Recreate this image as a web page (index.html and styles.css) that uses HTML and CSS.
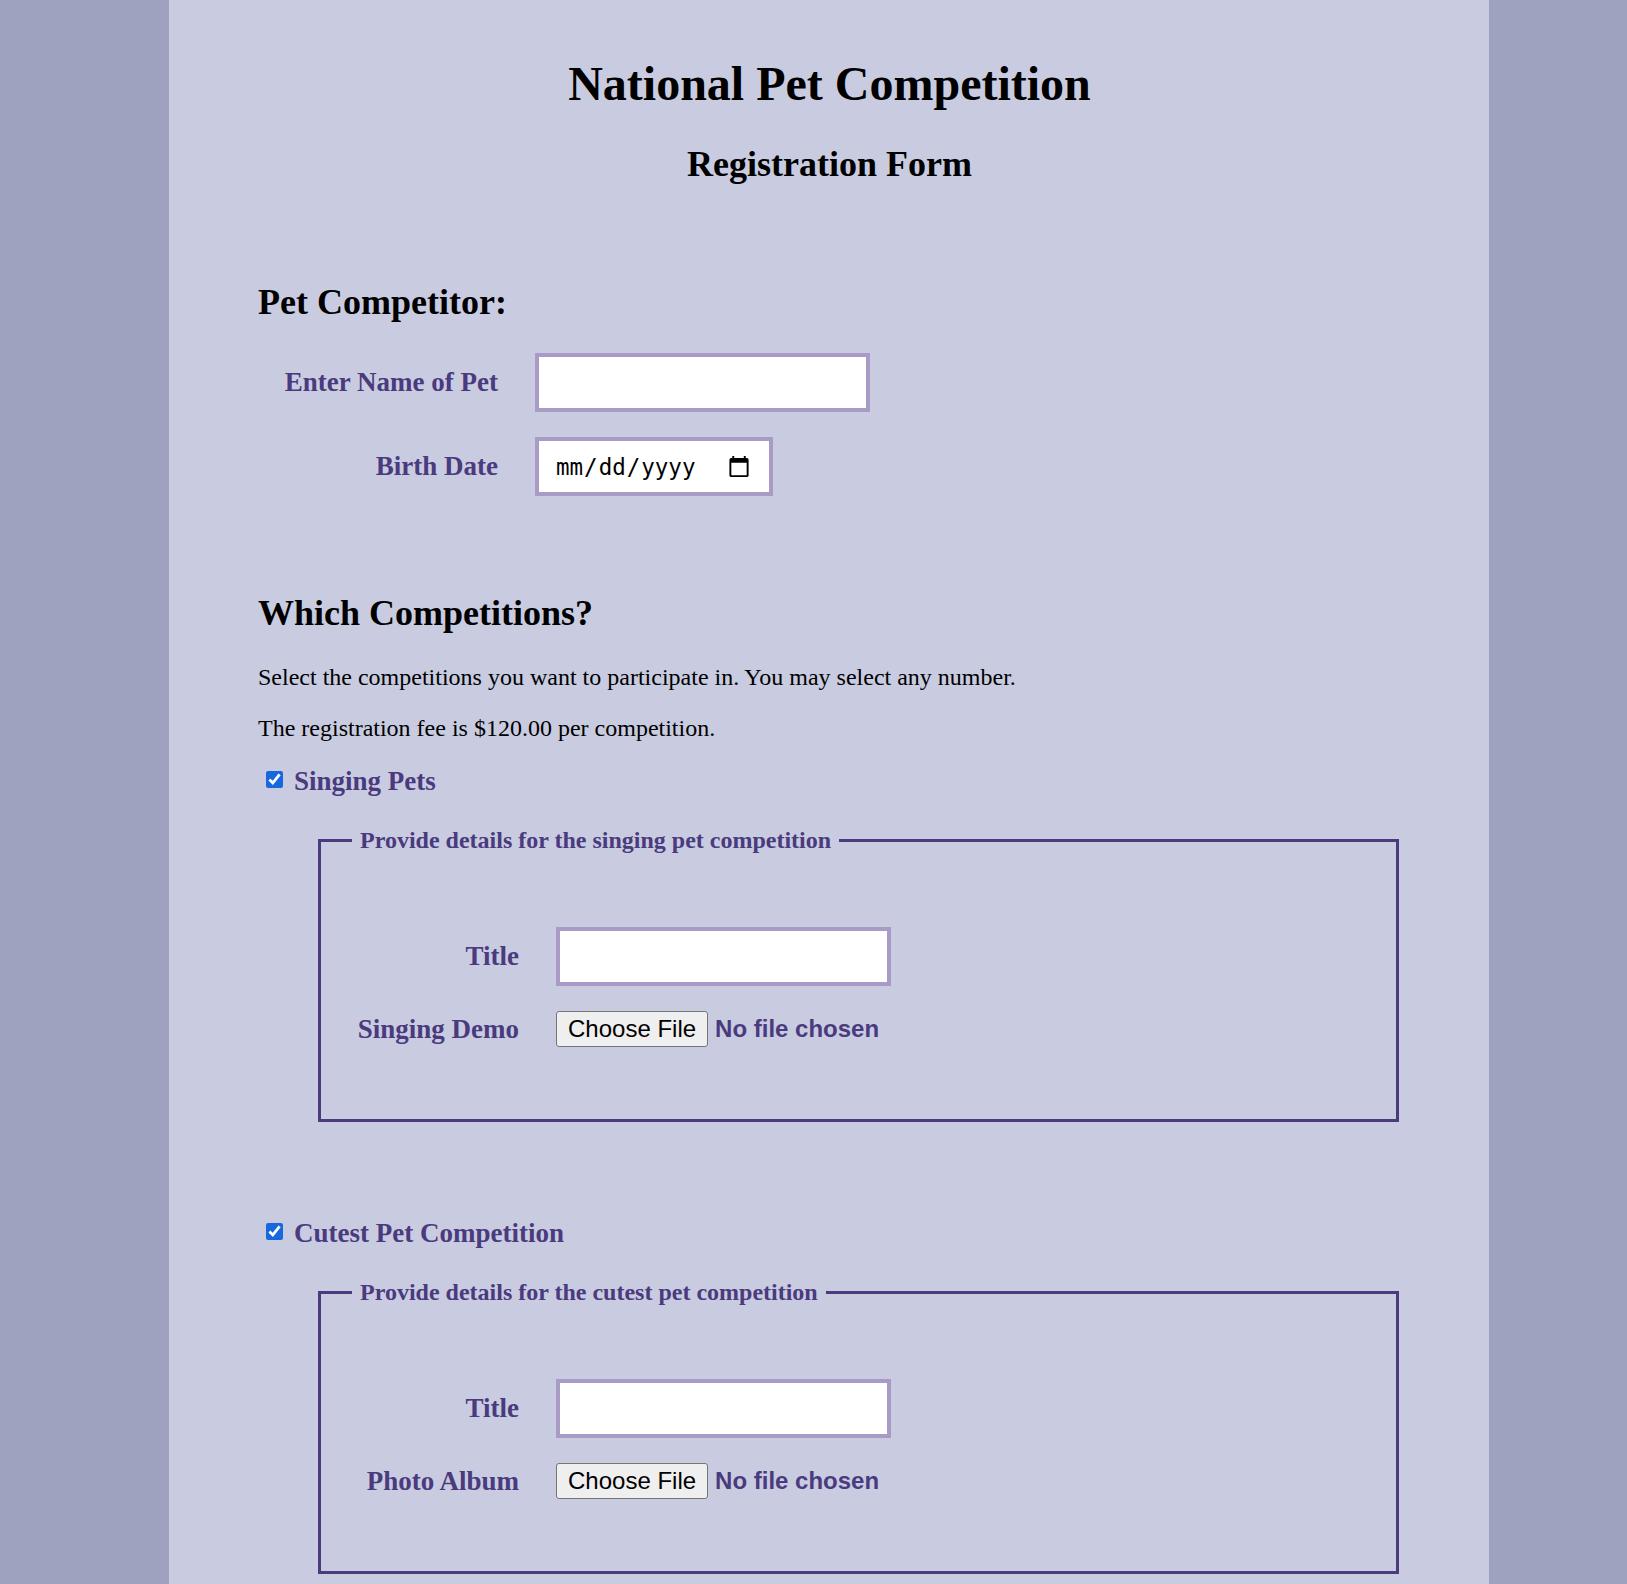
FILE: index.html
```html
<!DOCTYPE html>
<html lang="en">
<head>
<meta charset="utf-8">
<title>National Pet Competition</title>
<link rel="stylesheet" href="styles.css">
</head>
<body>
<div class="page">
  <header class="masthead">
    <h1 class="title">National Pet Competition</h1>
    <h2 class="subtitle">Registration Form</h2>
  </header>

  <section class="competitor">
    <h2 class="section-title">Pet Competitor:</h2>
    <div class="field">
      <label class="field-label" for="petName">Enter Name of Pet</label>
      <input class="text-box" type="text" id="petName">
    </div>
    <div class="field">
      <label class="field-label" for="birthDate">Birth Date</label>
      <input class="text-box date-box" type="date" id="birthDate">
    </div>
  </section>

  <section class="competitions">
    <h2 class="section-title">Which Competitions?</h2>
    <p class="note">Select the competitions you want to participate in. You may select any number.</p>
    <p class="note">The registration fee is $120.00 per competition.</p>

    <label class="choice"><input type="checkbox" checked> Singing Pets</label>
    <fieldset class="details">
      <legend>Provide details for the singing pet competition</legend>
      <div class="field">
        <label class="field-label" for="songTitle">Title</label>
        <input class="text-box" type="text" id="songTitle">
      </div>
      <div class="field">
        <label class="field-label" for="songDemo">Singing Demo</label>
        <input class="file-box" type="file" id="songDemo">
      </div>
    </fieldset>

    <label class="choice"><input type="checkbox" checked> Cutest Pet Competition</label>
    <fieldset class="details">
      <legend>Provide details for the cutest pet competition</legend>
      <div class="field">
        <label class="field-label" for="photoTitle">Title</label>
        <input class="text-box" type="text" id="photoTitle">
      </div>
      <div class="field">
        <label class="field-label" for="photoAlbum">Photo Album</label>
        <input class="file-box" type="file" id="photoAlbum">
      </div>
    </fieldset>
  </section>
</div>
</body>
</html>
```
FILE: styles.css
```css
* { box-sizing: border-box; }
html, body { margin: 0; }
body {
  background: #9ea2bf;
  font-family: "Liberation Serif", "Times New Roman", serif;
  font-size: 24px;
  color: #000;
}
.page {
  width: 1320px;
  margin-left: 169px;
  background: #c9cce0;
  padding: 24px 88px 40px 89px;
  min-height: 1584px;
}
.masthead { text-align: center; }
.title { font-size: 48px; margin: 32px 0 0; }
.subtitle { font-size: 36px; margin: 32px 0 0; }
.section-title { font-size: 36px; margin: 96px 0 30px; }
.field { display: flex; align-items: center; margin-bottom: 25px; }
.details .field:last-child { margin-bottom: 0; }
.field-label {
  width: 240px;
  margin-right: 37px;
  text-align: right;
  font-size: 27px;
  font-weight: bold;
  color: #4a3a7e;
}
.details .field-label { width: 167px; }
.text-box {
  width: 335px;
  height: 59px;
  border: 4px solid #a89cc6;
  background: #fff;
  padding: 0 16px;
  font: 22.5px "DejaVu Sans Mono", monospace;
  color: #000;
  outline: none;
  border-radius: 0;
}
.date-box { width: 238px; }
.date-box::-webkit-calendar-picker-indicator {
  width: 24px;
  height: 24px;
  padding: 1px;
  margin-right: 1px;
}
.note { margin: 24px 0; }
.choice {
  display: flex;
  align-items: center;
  font-size: 27px;
  font-weight: bold;
  color: #4a3a7e;
  margin-top: 24px;
}
.choice input {
  width: 17px;
  height: 17px;
  margin: 0 11px 4px 8px;
  accent-color: #1668dc;
}
.details {
  margin: 30px 2px 96px 60px;
  border: 3px solid #4a3a7e;
  padding: 73px 31px 72px;
}
.details legend {
  padding: 0 8px;
  font-size: 24px;
  font-weight: bold;
  color: #4a3a7e;
}
.file-box {
  font: bold 24px "Liberation Sans", Arial, sans-serif;
  color: #4a3a7e;
}
.file-box::file-selector-button {
  font: 24px "Liberation Sans", Arial, sans-serif;
  color: #000;
  background: #efefef;
  border: 1px solid #767676;
  border-radius: 3px;
  padding: 0 11px;
  margin-right: 7px;
  height: 36px;
}
```
